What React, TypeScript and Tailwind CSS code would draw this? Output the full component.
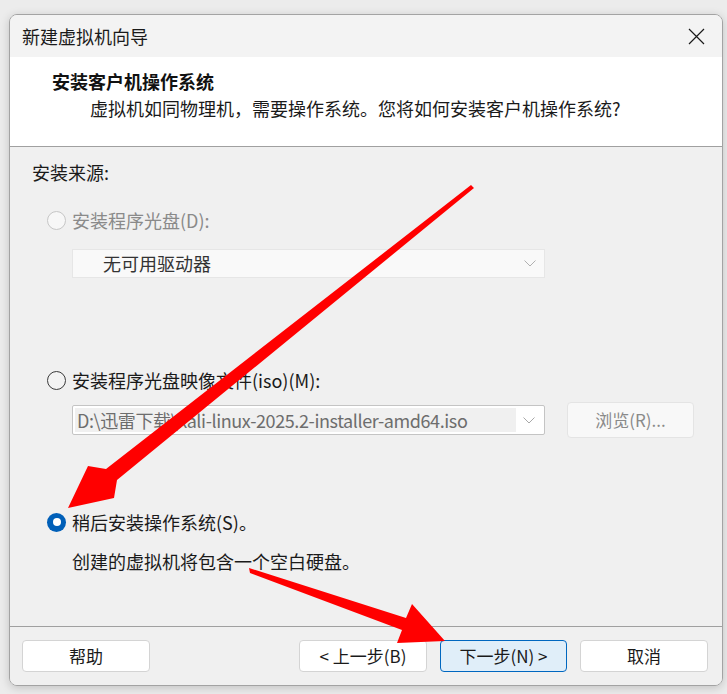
import React from 'react';

const font = { fontFamily: '"Noto Sans CJK SC", "Noto Sans", sans-serif' };

function Chevron({ color = '#9a9a9a' }: { color?: string }) {
  return (
    <svg width="12" height="7" viewBox="0 0 12 7" fill="none">
      <path d="M0.5 0.5 L6 6 L11.5 0.5" stroke={color} strokeWidth="1" />
    </svg>
  );
}

function Radio({ state }: { state: 'disabled' | 'off' | 'on' }) {
  if (state === 'on') {
    return (
      <span className="w-[19px] h-[19px] rounded-full bg-[#005fb8] flex items-center justify-center shrink-0">
        <span className="w-[8px] h-[8px] rounded-full bg-white" />
      </span>
    );
  }
  return (
    <span
      className={
        state === 'disabled'
          ? 'w-[19px] h-[19px] rounded-full border border-[#c6c6c6] bg-[#f7f7f7] shrink-0'
          : 'w-[19px] h-[19px] rounded-full border border-[#3a3a3a] bg-[#f3f3f3] shrink-0'
      }
    />
  );
}

function Btn({ children, primary }: { children: React.ReactNode; primary?: boolean }) {
  return (
    <button
      className={
        primary
          ? 'w-[127px] h-[32px] rounded-[4px] border border-[#0067c0] bg-[#e0eef9] text-[17px] text-[#1a1a1a] flex items-center justify-center'
          : 'w-[128px] h-[32px] rounded-[4px] border border-[#d4d4d4] bg-white text-[17px] text-[#1a1a1a] flex items-center justify-center'
      }
    >
      {children}
    </button>
  );
}

export default function App() {
  return (
    <div className="relative w-[727px] h-[694px] bg-[#ececec] pt-[14px] pl-[9px]" style={font}>
      <div className="w-[714px] h-[672px] rounded-[8px] border border-[#a3a3a3] overflow-hidden flex flex-col shadow-[0_2px_10px_rgba(0,0,0,0.18)]">
        {/* title bar */}
        <div className="h-[42px] bg-[#f3f3f3] flex items-center justify-between pl-[12px] pr-[17px]">
          <span className="text-[18px] leading-[24px] text-[#1a1a1a]">新建虚拟机向导</span>
          <svg width="17" height="17" viewBox="0 0 17 17">
            <path d="M1 1 L16 16 M16 1 L1 16" stroke="#1a1a1a" strokeWidth="1.2" />
          </svg>
        </div>

        {/* header */}
        <div className="h-[90px] bg-white border-b border-[#a0a0a0] pt-[12px] pl-[42px]">
          <div className="text-[18px] leading-[24px] font-bold text-[#111]">安装客户机操作系统</div>
          <div className="text-[18px] leading-[24px] text-[#1a1a1a] mt-[3px] pl-[38px]">
            虚拟机如同物理机，需要操作系统。您将如何安装客户机操作系统?
          </div>
        </div>

        {/* content */}
        <div className="flex-1 bg-[#f0f0f0] border-b border-[#a0a0a0] pt-[13px] pl-[22px]">
          <div className="text-[18px] leading-[24px] text-[#1a1a1a]">安装来源:</div>

          <div className="mt-[24px] ml-[15px] flex items-center gap-[6px] h-[24px]">
            <Radio state="disabled" />
            <span className="text-[18px] leading-[24px] text-[#8a8a8a]">安装程序光盘(D):</span>
          </div>
          <div className="mt-[17px] ml-[40px] w-[473px] h-[29px] bg-[#f9f9f9] border border-[#e6e6e6] flex items-center justify-between pl-[30px] pr-[8px]">
            <span className="text-[18px] leading-[24px] text-[#333] -mt-[2px]">无可用驱动器</span>
            <Chevron color="#b0b0b0" />
          </div>

          <div className="mt-[90px] ml-[15px] flex items-center gap-[6px] h-[24px]">
            <Radio state="off" />
            <span className="text-[18px] leading-[24px] text-[#1a1a1a]">安装程序光盘映像文件(iso)(M):</span>
          </div>
          <div className="mt-[10px] ml-[40px] flex items-center gap-[22px]">
            <div className="w-[473px] h-[30px] bg-white border border-[#c4c4c4] rounded-[2px] flex items-center p-[2px]">
              <div className="flex-1 h-full bg-[#f0f0f0] flex items-center pl-[2px] overflow-hidden">
                <span className="text-[18px] leading-[24px] text-[#6d6d6d] whitespace-nowrap tracking-[-0.4px]">
                  D:\迅雷下载\kali-linux-2025.2-installer-amd64.iso
                </span>
              </div>
              <div className="w-[26px] flex justify-center">
                <Chevron color="#a8a8a8" />
              </div>
            </div>
            <button className="w-[127px] h-[36px] rounded-[4px] bg-[#f8f8f8] border border-[#e4e4e4] text-[17px] text-[#8a8a8a] flex items-center justify-center">
              浏览(R)...
            </button>
          </div>

          <div className="mt-[72px] ml-[15px] flex items-center gap-[6px] h-[24px]">
            <Radio state="on" />
            <span className="text-[18px] leading-[24px] text-[#1a1a1a]">稍后安装操作系统(S)。</span>
          </div>
          <div className="mt-[15px] ml-[40px] text-[18px] leading-[24px] text-[#1a1a1a]">
            创建的虚拟机将包含一个空白硬盘。
          </div>
        </div>

        {/* footer */}
        <div className="h-[58px] bg-[#f0f0f0] flex items-start pt-[13px] pl-[12px] pr-[14px]">
          <Btn>帮助</Btn>
          <div className="flex-1" />
          <div className="flex gap-[13px]">
            <Btn>&lt; 上一步(B)</Btn>
            <Btn primary>下一步(N) &gt;</Btn>
            <Btn>取消</Btn>
          </div>
        </div>
      </div>

      {/* annotation arrows */}
      <svg className="absolute inset-0 pointer-events-none" width="727" height="694" viewBox="0 0 727 694">
        <polygon
          fill="#ff0000"
          points="471,185 474,188 117,480 114,498 68,508 88,466 106,469"
        />
        <polygon
          fill="#ff0000"
          points="249,568 406,618 412,604 445,641 397,643 402,630 250,573"
        />
      </svg>
    </div>
  );
}
